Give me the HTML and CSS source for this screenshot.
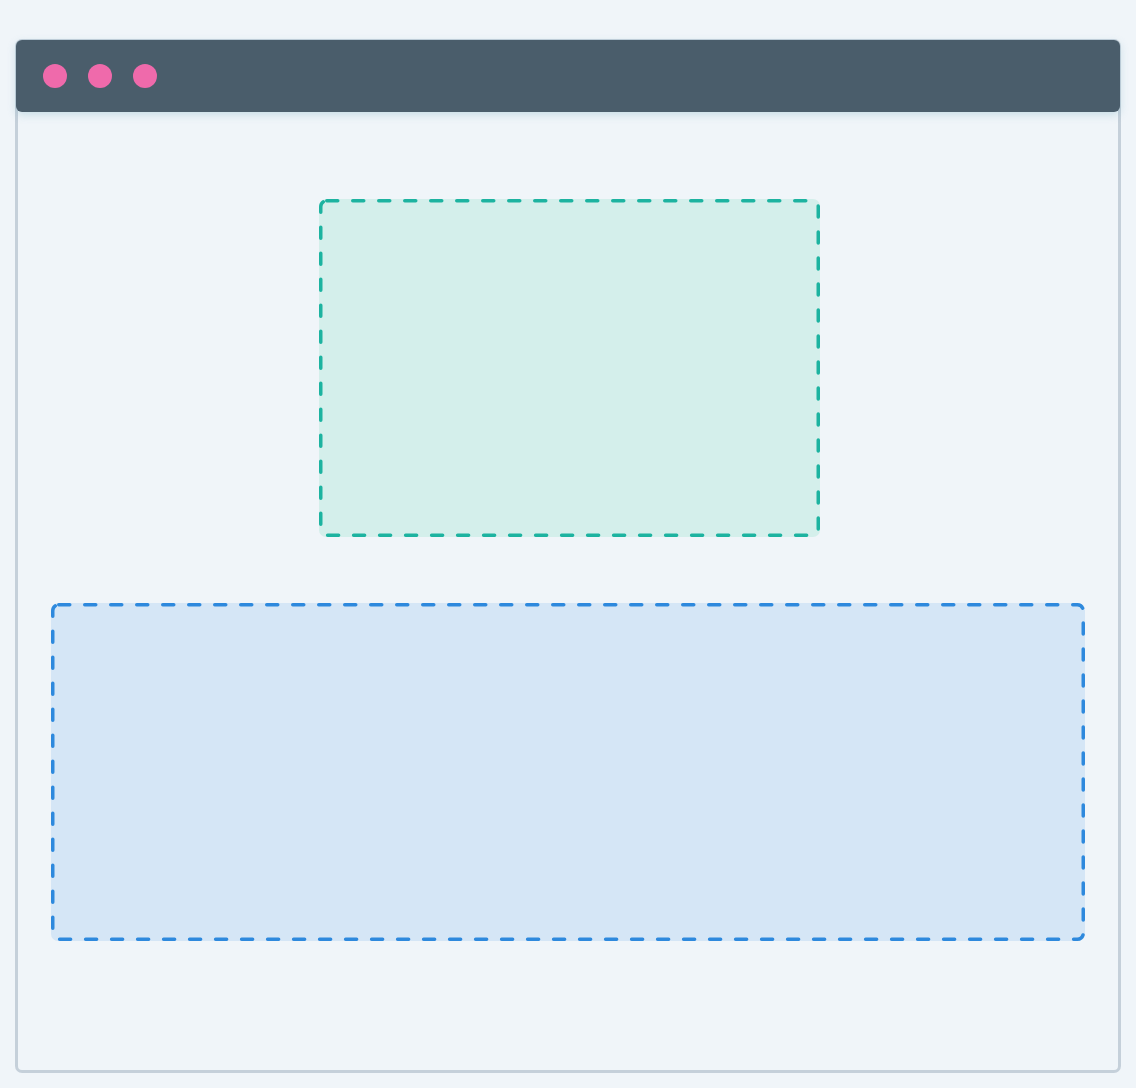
FILE: index.html
```html
<!DOCTYPE html>
<html lang="en">
<head>
    <meta charset="UTF-8">
    <meta name="viewport" content="width=device-width, initial-scale=1.0">
    <title>Window layout</title>
    <link rel="stylesheet" href="styles.css">
</head>
<body>
<div class="window">
    <div class="titlebar">
        <span class="dot"></span>
        <span class="dot"></span>
        <span class="dot"></span>
    </div>
    <div class="content">
        <div class="zone zone-green">
            <svg class="outline" width="501" height="338" viewBox="0 0 501 338">
                <rect x="1.75" y="1.75" width="497.5" height="334.5" rx="6" ry="6"/>
            </svg>
        </div>
        <div class="zone zone-blue">
            <svg class="outline" width="1034" height="338" viewBox="0 0 1034 338">
                <rect x="1.75" y="1.75" width="1030.5" height="334.5" rx="6" ry="6"/>
            </svg>
        </div>
    </div>
</div>
</body>
</html>
```

FILE: styles.css
```css
body {
    margin: 0;
    padding: 0;
    background-color: #f0f5f9;
    font-family: "Liberation Sans", Arial, sans-serif;
}
.window {
    box-sizing: border-box;
    width: 1106px;
    height: 1034px;
    margin: 39px 0 0 15px;
    border: 3px solid #c5d0da;
    border-radius: 7px;
    background-color: #f0f5f9;
}
.titlebar {
    display: flex;
    align-items: center;
    gap: 21px;
    height: 72px;
    margin: -2px -2px 0;
    padding-left: 27px;
    padding-bottom: 1px;
    box-sizing: border-box;
    background-color: #4a5d6b;
    border-radius: 6px;
    box-shadow: 0 3px 8px rgba(110, 170, 190, 0.3);
}
.dot {
    width: 24px;
    height: 24px;
    border-radius: 50%;
    background-color: #ef6aab;
}
.content {
    display: flex;
    flex-direction: column;
    align-items: flex-start;
    gap: 66px;
    padding: 87px 33px 0;
}
.zone {
    position: relative;
    height: 338px;
    border-radius: 7px;
}
.zone-green {
    width: 501px;
    margin-left: 268px;
    background-color: #d4efeb;
}
.zone-blue {
    width: 1034px;
    background-color: #d5e6f6;
}
.outline {
    position: absolute;
    top: 0;
    left: 0;
}
.outline rect {
    fill: none;
    stroke-width: 3.5;
    stroke-dasharray: 11 15;
    stroke-linecap: round;
}
.zone-green .outline rect {
    stroke: #1db3a0;
}
.zone-blue .outline rect {
    stroke: #2e89dd;
}
```
